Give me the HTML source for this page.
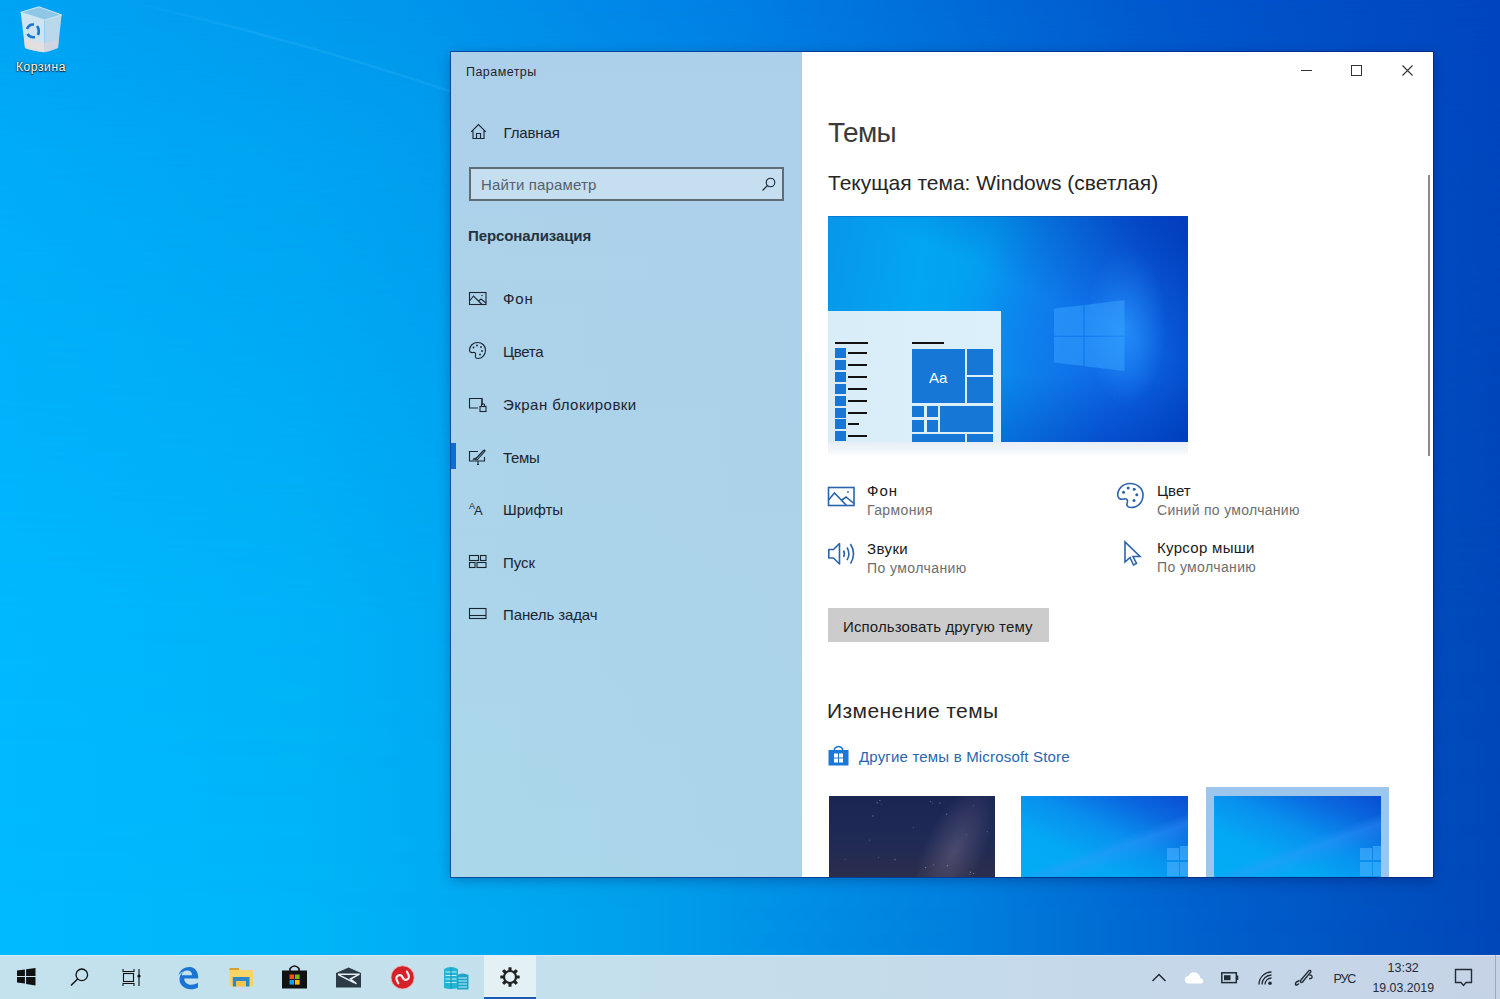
<!DOCTYPE html>
<html><head><meta charset="utf-8"><style>
html,body{margin:0;padding:0;width:1500px;height:999px;overflow:hidden;}
body{position:relative;font-family:'Liberation Sans', sans-serif;}
.t{position:absolute;white-space:nowrap;font-family:'Liberation Sans', sans-serif;}
svg{overflow:visible}
</style></head><body>
<div style="position:absolute;left:0px;top:0px;width:1500px;height:999px;background:linear-gradient(90deg,#00a4f4 0px,#0096ec 415px,#0082e6 700px,#006cd8 950px,#0055cc 1195px,#0045c0 1500px)"></div><div style="position:absolute;left:0px;top:0px;width:1500px;height:999px;background:linear-gradient(90deg,#00baff 0px,#00b5f9 300px,#00a0ec 635px,#0080de 955px,#0060cc 1205px,#0047b8 1500px);-webkit-mask-image:linear-gradient(180deg,rgba(0,0,0,0) 0px,rgba(0,0,0,0.35) 150px,rgba(0,0,0,0.55) 310px,rgba(0,0,0,0.9) 610px,#000 955px);mask-image:linear-gradient(180deg,rgba(0,0,0,0) 0px,rgba(0,0,0,0.35) 150px,rgba(0,0,0,0.55) 310px,rgba(0,0,0,0.9) 610px,#000 955px)"></div><svg style="position:absolute;left:0px;top:0px" width="460" height="100" viewBox="0 0 460 100"><defs><linearGradient id="sg" x1="0" x2="1"><stop offset="0" stop-color="#7fd6ff" stop-opacity="0"/><stop offset="0.4" stop-color="#7fd6ff" stop-opacity="0.12"/><stop offset="1" stop-color="#7fd6ff" stop-opacity="0.1"/></linearGradient></defs><path d="M120 0 Q300 40 452 92" fill="none" stroke="url(#sg)" stroke-width="2.5"/></svg><svg style="position:absolute;left:18px;top:5px" width="46" height="50" viewBox="0 0 46 50">
<path d="M2.7 7.3 L26.6 15 L26 47.3 Q15 46 7 43 Z" fill="#dfe9f0" fill-opacity="0.92"/>
<path d="M26.6 15 L43.6 9.9 L40 43 Q33 46 26 47.3 Z" fill="#c9dceb" fill-opacity="0.92"/>
<path d="M2.7 7.3 L21 1.8 L43.6 9.9 L26.6 15 Z" fill="#9fcbe6" fill-opacity="0.9" stroke="#cfe8f6" stroke-width="1"/>
<path d="M6 34 L26.3 38 L26 47.3 Q15 46 7 43 Z" fill="#ecdcd8" fill-opacity="0.7"/>
<path d="M26.3 38 L40.8 35 L40 43 Q33 46 26 47.3 Z" fill="#e0d4d8" fill-opacity="0.6"/>
<g fill="none" stroke="#1b74cc" stroke-width="2.6"><path d="M9 24 Q11 19 16 19.5"/><path d="M19 21 Q22 25 20 30"/><path d="M17 32 Q12 33 9.5 29"/></g>
</svg><div class="t" style="left:16.0px;top:61.3px;font-size:12px;line-height:12px;color:#fff;font-weight:400;letter-spacing:0.6px;text-shadow:0 0 2px rgba(0,0,0,0.9),0 1px 1px rgba(0,0,0,0.8);">Корзина</div><div style="position:absolute;left:451px;top:52px;width:982px;height:825px;box-shadow:0 0 0 1px rgba(0,25,110,0.55),0 3px 12px rgba(0,0,60,0.3)"></div><div style="position:absolute;left:451px;top:52px;width:351px;height:825px;background:linear-gradient(180deg,#add0ea 0%,#acd4ea 50%,#aad8ea 100%)"></div><div style="position:absolute;left:451px;top:52px;width:351px;height:825px;background:linear-gradient(90deg,rgba(172,214,234,0) 0%,rgba(172,208,234,0.5) 100%)"></div><div class="t" style="left:466.0px;top:66.1px;font-size:12.5px;line-height:12.5px;color:#1b2530;font-weight:400;letter-spacing:0.45px;">Параметры</div><svg style="position:absolute;left:470px;top:123px" width="18" height="17" viewBox="0 0 18 17"><path d="M1.2 8.8 L8.5 1.5 L15.8 8.8 M3 7 V15.5 H14 V7 M6.5 15.5 V10.5 H10.5 V15.5" fill="none" stroke="#1b2530" stroke-width="1.1"/></svg><div class="t" style="left:503.6px;top:125.3px;font-size:15px;line-height:15px;color:#1b2530;font-weight:400;letter-spacing:-0.15px;">Главная</div><div style="position:absolute;left:469px;top:167px;width:315px;height:34px;box-sizing:border-box;border:2px solid #5f6b75;background:rgba(255,255,255,0.3)"></div><div class="t" style="left:481.0px;top:176.8px;font-size:15px;line-height:15px;color:#56616b;font-weight:400;letter-spacing:0.14px;">Найти параметр</div><svg style="position:absolute;left:761px;top:177px" width="15" height="15" viewBox="0 0 15 15"><circle cx="9.5" cy="5.5" r="4.3" fill="none" stroke="#1b2530" stroke-width="1.1"/><path d="M6.5 8.5 L1.5 13.5" fill="none" stroke="#1b2530" stroke-width="1.1"/></svg><div class="t" style="left:468.0px;top:227.8px;font-size:15px;line-height:15px;color:#243240;font-weight:700;letter-spacing:-0.12px;">Персонализация</div><div class="t" style="left:503.0px;top:291.3px;font-size:15px;line-height:15px;color:#1b2530;font-weight:400;letter-spacing:0.9px;">Фон</div><div class="t" style="left:503.0px;top:344.3px;font-size:15px;line-height:15px;color:#1b2530;font-weight:400;letter-spacing:-0.3px;">Цвета</div><div class="t" style="left:503.0px;top:396.8px;font-size:15px;line-height:15px;color:#1b2530;font-weight:400;letter-spacing:0.47px;">Экран блокировки</div><div class="t" style="left:503.0px;top:449.6px;font-size:15px;line-height:15px;color:#1b2530;font-weight:400;letter-spacing:-0.3px;">Темы</div><div class="t" style="left:503.0px;top:502.3px;font-size:15px;line-height:15px;color:#1b2530;font-weight:400;letter-spacing:0px;">Шрифты</div><div class="t" style="left:503.0px;top:555.0px;font-size:15px;line-height:15px;color:#1b2530;font-weight:400;letter-spacing:0px;">Пуск</div><div class="t" style="left:503.0px;top:606.7px;font-size:15px;line-height:15px;color:#1b2530;font-weight:400;letter-spacing:-0.12px;">Панель задач</div><svg style="position:absolute;left:468px;top:291px" width="20" height="15" viewBox="0 0 20 15"><rect x="1.5" y="1.5" width="16.5" height="12" fill="none" stroke="#1b2530" stroke-width="1.1"/><path d="M1.5 10 L5.5 5 L14 13.5 M10.5 10 L13 8 L18 12" fill="none" stroke="#1b2530" stroke-width="1.1"/><circle cx="14" cy="4.5" r="0.7" fill="#1b2530"/></svg><svg style="position:absolute;left:468px;top:341px" width="20" height="20" viewBox="0 0 20 20"><path d="M9.5 1.5 C14.5 1.5 17.5 5 17.5 9 C17.5 14 14 17.5 10 17.5 C7.5 17.5 7 16 7.5 14 C8 12 7 11 5 11.5 C2.5 12 1.5 10.5 1.5 9 C1.5 5 5 1.5 9.5 1.5 Z" fill="none" stroke="#1b2530" stroke-width="1.1"/><circle cx="5.5" cy="6.5" r="0.9" fill="#1b2530"/><circle cx="9" cy="4.5" r="0.9" fill="#1b2530"/><circle cx="13" cy="6" r="0.9" fill="#1b2530"/><circle cx="14" cy="10" r="0.9" fill="#1b2530"/><circle cx="12" cy="13.5" r="0.9" fill="#1b2530"/></svg><svg style="position:absolute;left:468px;top:397px" width="20" height="15" viewBox="0 0 20 15"><path d="M14 8 V1.5 H1.5 V11 H10" fill="none" stroke="#1b2530" stroke-width="1.1"/><path d="M14 8 V1.5" fill="none" stroke="#1b2530" stroke-width="1.1"/><rect x="12" y="9.5" width="6" height="5" fill="none" stroke="#1b2530" stroke-width="1.1"/><path d="M13.5 9.5 V7.5 Q15 6 16.5 7.5 V9.5" fill="none" stroke="#1b2530" stroke-width="1.1"/></svg><svg style="position:absolute;left:468px;top:448px" width="20" height="18" viewBox="0 0 20 18"><path d="M10 3.5 H1.5 V13 H16.5 V9" fill="none" stroke="#1b2530" stroke-width="1.1"/><path d="M9 16.5 H11 M10 13 V16.5" fill="none" stroke="#1b2530" stroke-width="1.1"/><path d="M7 11.5 L15.5 2.5 Q17 1.5 17 3 L9 12 Z" fill="none" stroke="#1b2530" stroke-width="1.1"/><path d="M5 12 Q6 9.5 8 10.5" fill="none" stroke="#1b2530" stroke-width="1.1"/></svg><svg style="position:absolute;left:469px;top:501px" width="18" height="16" viewBox="0 0 18 16"><text x="0" y="8" font-family="Liberation Sans" font-size="9" fill="#1b2530">A</text><text x="5" y="14" font-family="Liberation Sans" font-size="13" fill="#1b2530">A</text></svg><svg style="position:absolute;left:468px;top:554px" width="20" height="15" viewBox="0 0 20 15"><rect x="1.5" y="1.5" width="9" height="5" fill="none" stroke="#1b2530" stroke-width="1.1"/><rect x="12.5" y="1.5" width="5.5" height="5" fill="none" stroke="#1b2530" stroke-width="1.1"/><rect x="1.5" y="8.5" width="5.5" height="5" fill="none" stroke="#1b2530" stroke-width="1.1"/><rect x="9" y="8.5" width="9" height="5" fill="none" stroke="#1b2530" stroke-width="1.1"/></svg><svg style="position:absolute;left:468px;top:607px" width="20" height="13" viewBox="0 0 20 13"><rect x="1.5" y="1.5" width="16.5" height="10" fill="none" stroke="#1b2530" stroke-width="1.1"/><path d="M1.5 8.5 H18" fill="none" stroke="#1b2530" stroke-width="1.1"/></svg><div style="position:absolute;left:451px;top:443px;width:5px;height:26px;background:#0b6ed0"></div><div style="position:absolute;left:802px;top:52px;width:631px;height:825px;background:#fff"></div><svg style="position:absolute;left:1300px;top:64px" width="14" height="12" viewBox="0 0 14 12"><path d="M1 6.5 H12" stroke="#333" stroke-width="1"/></svg><div style="position:absolute;left:1351px;top:64.5px;width:11px;height:11px;box-sizing:border-box;border:1px solid #333"></div><svg style="position:absolute;left:1401px;top:64px" width="13" height="13" viewBox="0 0 13 13"><path d="M1.5 1.5 L11.5 11.5 M11.5 1.5 L1.5 11.5" stroke="#333" stroke-width="1.1"/></svg><div style="position:absolute;left:1428px;top:175px;width:2px;height:281px;background:#8a8a8a"></div><div class="t" style="left:828.0px;top:118.5px;font-size:28px;line-height:28px;color:#3a3a3a;font-weight:400;letter-spacing:-0.6px;">Темы</div><div class="t" style="left:828.0px;top:172.4px;font-size:21px;line-height:21px;color:#262626;font-weight:400;letter-spacing:0px;">Текущая тема: Windows (светлая)</div><div style="position:absolute;left:828px;top:216px;width:360px;height:226px;overflow:hidden;
background:
radial-gradient(ellipse 40px 80px at 298px 110px, rgba(40,150,255,0.8), rgba(40,140,255,0) 100%),
radial-gradient(ellipse 150px 120px at 262px 120px, rgba(20,120,245,0.75), rgba(10,100,230,0) 100%),
linear-gradient(100deg,#0896ea 0%,#02a6f2 25%,#03a0f0 42%,#0a7ee4 60%,#0858d4 78%,#0042c0 100%);">
<div style="position:absolute;left:0;top:0;width:360px;height:226px;background:linear-gradient(205deg,rgba(0,50,180,0.55) 0%,rgba(0,50,180,0) 38%)"></div>
<div style="position:absolute;left:0;top:0;width:360px;height:226px;background:linear-gradient(0deg,rgba(0,60,190,0.35) 0%,rgba(0,60,190,0) 30%)"></div>
<div style="position:absolute;left:0;top:0;width:360px;height:1px;background:rgba(0,70,170,0.35)"></div><svg style="position:absolute;left:0;top:0" width="360" height="226">
<g fill="#3aa6ff" fill-opacity="0.5">
<path d="M226 92.5 L255.5 89.2 L255.5 119.7 L226 119.7 Z"/>
<path d="M256.5 89 L296.5 84 L296.5 119.7 L256.5 119.7 Z"/>
<path d="M226 120.7 L255.5 120.7 L255.5 150 L226 146.6 Z"/>
<path d="M256.5 120.7 L296.5 120.7 L296.5 155 L256.5 150.3 Z"/>
</g></svg>
</div><div style="position:absolute;left:828px;top:442px;width:360px;height:14px;background:linear-gradient(180deg,#e6eef5,#f4f7fa 70%,#fff)"></div><div style="position:absolute;left:828px;top:311px;width:173px;height:131px;background:linear-gradient(90deg,#d9edf9,#dcf0fb)"></div><div style="position:absolute;left:835px;top:342px;width:33px;height:2px;background:#111"></div><div style="position:absolute;left:835px;top:348px;width:10.5px;height:10px;background:#1677d6"></div><div style="position:absolute;left:848px;top:352px;width:18.5px;height:2px;background:#111"></div><div style="position:absolute;left:835px;top:360px;width:10.5px;height:10px;background:#1677d6"></div><div style="position:absolute;left:848px;top:364px;width:18.5px;height:2px;background:#111"></div><div style="position:absolute;left:835px;top:372px;width:10.5px;height:10px;background:#1677d6"></div><div style="position:absolute;left:848px;top:376px;width:18.5px;height:2px;background:#111"></div><div style="position:absolute;left:835px;top:384px;width:10.5px;height:10px;background:#1677d6"></div><div style="position:absolute;left:848px;top:388px;width:18.5px;height:2px;background:#111"></div><div style="position:absolute;left:835px;top:396px;width:10.5px;height:10px;background:#1677d6"></div><div style="position:absolute;left:848px;top:400px;width:18.5px;height:2px;background:#111"></div><div style="position:absolute;left:835px;top:408px;width:10.5px;height:10px;background:#1677d6"></div><div style="position:absolute;left:848px;top:412px;width:18.5px;height:2px;background:#111"></div><div style="position:absolute;left:835px;top:419px;width:10.5px;height:10px;background:#1677d6"></div><div style="position:absolute;left:848px;top:423px;width:11px;height:2px;background:#111"></div><div style="position:absolute;left:835px;top:431px;width:10.5px;height:10px;background:#1677d6"></div><div style="position:absolute;left:848px;top:435px;width:18.5px;height:2px;background:#111"></div><div style="position:absolute;left:912px;top:342px;width:32px;height:2px;background:#111"></div><div style="position:absolute;left:912px;top:348.5px;width:52.799999999999955px;height:54.5px;background:#1677d6"></div><div style="position:absolute;left:967px;top:348.5px;width:26px;height:26.0px;background:#1677d6"></div><div style="position:absolute;left:967px;top:377px;width:26px;height:26px;background:#1677d6"></div><div style="position:absolute;left:912px;top:405.5px;width:12px;height:11.5px;background:#1677d6"></div><div style="position:absolute;left:926.5px;top:405.5px;width:11.5px;height:11.5px;background:#1677d6"></div><div style="position:absolute;left:912px;top:419.5px;width:12px;height:12.0px;background:#1677d6"></div><div style="position:absolute;left:926.5px;top:419.5px;width:11.5px;height:12.0px;background:#1677d6"></div><div style="position:absolute;left:940px;top:405.5px;width:53px;height:26.0px;background:#1677d6"></div><div style="position:absolute;left:912px;top:434px;width:52.799999999999955px;height:8px;background:#1677d6"></div><div style="position:absolute;left:967px;top:434px;width:26px;height:8px;background:#1677d6"></div><div class="t" style="left:929.0px;top:370.3px;font-size:15px;line-height:15px;color:#fff;font-weight:400;letter-spacing:0px;">Aa</div><svg style="position:absolute;left:827px;top:486px" width="29" height="21" viewBox="0 0 29 21"><rect x="1.5" y="1.5" width="25.5" height="18" fill="none" stroke="#2b64ac" stroke-width="1.6"/><path d="M1.5 14 L7.5 7 L19.5 19.5 M15 14 L19 11 L27 17.5" fill="none" stroke="#2b64ac" stroke-width="1.6"/><circle cx="21" cy="6" r="0.9" fill="#2b64ac"/></svg><div class="t" style="left:867.0px;top:483.3px;font-size:15px;line-height:15px;color:#1a1a1a;font-weight:400;letter-spacing:1px;">Фон</div><div class="t" style="left:867.0px;top:503.3px;font-size:14px;line-height:14px;color:#6e6e6e;font-weight:400;letter-spacing:0.37px;">Гармония</div><svg style="position:absolute;left:1116px;top:482px" width="30" height="28" viewBox="0 0 30 28"><path d="M14 1.5 C21.5 1.5 27 6.5 27 13 C27 20.5 21.5 25.5 15 25.5 C11 25.5 10.3 23 11.3 20.5 C12.2 18.3 10.8 16.2 7.8 17 C4 18 1.7 16 1.7 13 C1.7 6.5 7 1.5 14 1.5 Z" fill="none" stroke="#2b64ac" stroke-width="1.6"/><circle cx="7.5" cy="10.2" r="1.5" fill="#2b64ac"/><circle cx="12.2" cy="6" r="1.5" fill="#2b64ac"/><circle cx="18.2" cy="7.3" r="1.5" fill="#2b64ac"/><circle cx="20.8" cy="12.8" r="1.5" fill="#2b64ac"/><circle cx="18" cy="18.5" r="1.5" fill="#2b64ac"/></svg><div class="t" style="left:1157.0px;top:483.0px;font-size:15px;line-height:15px;color:#1a1a1a;font-weight:400;letter-spacing:0px;">Цвет</div><div class="t" style="left:1157.0px;top:502.6px;font-size:14px;line-height:14px;color:#6e6e6e;font-weight:400;letter-spacing:0.3px;">Синий по умолчанию</div><svg style="position:absolute;left:827px;top:541px" width="30" height="26" viewBox="0 0 30 26"><path d="M1.8 8.5 H6.5 L12.5 2.5 V23 L6.5 17 H1.8 Z" fill="none" stroke="#2b64ac" stroke-width="1.6" stroke-linejoin="round"/><path d="M16.5 9.5 Q18.3 12.8 16.5 16 M20 6.5 Q23.8 12.8 20 19.2 M23.5 3 Q29.5 12.8 23.5 22.6" fill="none" stroke="#2b64ac" stroke-width="1.6"/></svg><div class="t" style="left:867.0px;top:540.9px;font-size:15px;line-height:15px;color:#1a1a1a;font-weight:400;letter-spacing:0.4px;">Звуки</div><div class="t" style="left:867.0px;top:560.9px;font-size:14px;line-height:14px;color:#6e6e6e;font-weight:400;letter-spacing:0.42px;">По умолчанию</div><svg style="position:absolute;left:1123px;top:540px" width="22" height="28" viewBox="0 0 22 28"><path d="M2 2 L2 22 L7 17.5 L10.5 25 L13.5 23.5 L10 16.5 L17 16.5 Z" fill="none" stroke="#2b64ac" stroke-width="1.6" stroke-linejoin="miter"/></svg><div class="t" style="left:1157.0px;top:540.0px;font-size:15px;line-height:15px;color:#1a1a1a;font-weight:400;letter-spacing:0.3px;">Курсор мыши</div><div class="t" style="left:1157.0px;top:559.7px;font-size:14px;line-height:14px;color:#6e6e6e;font-weight:400;letter-spacing:0.38px;">По умолчанию</div><div style="position:absolute;left:828px;top:608px;width:221px;height:34px;background:#cccccc"></div><div class="t" style="left:843.0px;top:619.4px;font-size:15px;line-height:15px;color:#1a1a1a;font-weight:400;letter-spacing:0.13px;">Использовать другую тему</div><div class="t" style="left:827.0px;top:700.1px;font-size:21px;line-height:21px;color:#262626;font-weight:400;letter-spacing:0.43px;">Изменение темы</div><svg style="position:absolute;left:827px;top:744px" width="23" height="23" viewBox="0 0 23 23"><path d="M7.5 6 V4.5 Q11.5 0.5 15.5 4.5 V6" fill="none" stroke="#1a78d8" stroke-width="1.6"/><rect x="1.5" y="6" width="20" height="15.5" fill="#1a78d8"/><rect x="7" y="9.5" width="4" height="4" fill="#fff"/><rect x="12" y="9.5" width="4" height="4" fill="#fff"/><rect x="7" y="14.5" width="4" height="4" fill="#fff"/><rect x="12" y="14.5" width="4" height="4" fill="#fff"/></svg><div class="t" style="left:859.0px;top:749.3px;font-size:15px;line-height:15px;color:#2a66b0;font-weight:400;letter-spacing:0.18px;">Другие темы в Microsoft Store</div><div style="position:absolute;left:1206px;top:787px;width:183px;height:90px;background:#9cc6ec"></div><div style="position:absolute;left:829px;top:796px;width:166px;height:81px;overflow:hidden;background:linear-gradient(180deg,#1a2552 0%,#1f2a55 55%,#2b2e4c 100%)">
<svg style="position:absolute;left:0;top:0" width="166" height="81"><circle cx="40.6" cy="43.9" r="0.5" fill="#fff" fill-opacity="0.33"/><circle cx="103.4" cy="7.0" r="0.4" fill="#fff" fill-opacity="0.40"/><circle cx="44.0" cy="20.0" r="0.8" fill="#fff" fill-opacity="0.29"/><circle cx="137.5" cy="38.7" r="0.7" fill="#fff" fill-opacity="0.20"/><circle cx="104.8" cy="68.8" r="0.6" fill="#fff" fill-opacity="0.37"/><circle cx="110.8" cy="6.9" r="0.7" fill="#fff" fill-opacity="0.33"/><circle cx="50.8" cy="4.4" r="0.7" fill="#fff" fill-opacity="0.29"/><circle cx="118.4" cy="69.7" r="0.7" fill="#fff" fill-opacity="0.43"/><circle cx="66.0" cy="63.7" r="0.6" fill="#fff" fill-opacity="0.43"/><circle cx="144.4" cy="9.5" r="0.5" fill="#fff" fill-opacity="0.22"/><circle cx="158.4" cy="35.6" r="0.7" fill="#fff" fill-opacity="0.24"/><circle cx="84.2" cy="31.7" r="0.5" fill="#fff" fill-opacity="0.33"/><circle cx="96.6" cy="71.6" r="0.7" fill="#fff" fill-opacity="0.43"/><circle cx="140.7" cy="78.3" r="0.7" fill="#fff" fill-opacity="0.20"/><circle cx="141.4" cy="76.3" r="0.8" fill="#fff" fill-opacity="0.32"/><circle cx="117.6" cy="18.3" r="0.7" fill="#fff" fill-opacity="0.32"/><circle cx="48.2" cy="6.9" r="0.7" fill="#fff" fill-opacity="0.45"/><circle cx="16.3" cy="63.6" r="0.6" fill="#fff" fill-opacity="0.20"/><circle cx="49.6" cy="61.2" r="0.7" fill="#fff" fill-opacity="0.16"/><circle cx="101.6" cy="5.5" r="0.7" fill="#fff" fill-opacity="0.25"/><circle cx="144.7" cy="77.5" r="0.6" fill="#fff" fill-opacity="0.45"/><circle cx="52.2" cy="7.9" r="0.6" fill="#fff" fill-opacity="0.16"/></svg><div style="position:absolute;left:95px;top:-20px;width:60px;height:150px;transform:rotate(25deg);background:radial-gradient(ellipse 30px 75px at 30px 75px,rgba(130,115,145,0.42),rgba(100,90,130,0) 100%)"></div>
</div><div style="position:absolute;left:1021px;top:796px;width:167px;height:81px;overflow:hidden;background:
linear-gradient(205deg,#0a4ed0 0%,#0a6ae0 22%,#0890ee 45%,#04a8f4 70%,#02acf5 100%)">
<div style="position:absolute;left:0;top:0;width:167px;height:81px;background:linear-gradient(160deg,rgba(255,255,255,0) 55%,rgba(60,150,255,0.35) 62%,rgba(60,150,255,0) 75%)"></div>
<div style="position:absolute;left:146px;top:52px;width:12px;height:12px;background:rgba(80,180,255,0.55)"></div>
<div style="position:absolute;left:159px;top:50px;width:12px;height:14px;background:rgba(80,180,255,0.55)"></div>
<div style="position:absolute;left:146px;top:66px;width:12px;height:14px;background:rgba(80,180,255,0.55)"></div>
<div style="position:absolute;left:159px;top:66px;width:12px;height:14px;background:rgba(80,180,255,0.55)"></div>
</div><div style="position:absolute;left:1214px;top:796px;width:167px;height:81px;overflow:hidden;background:
linear-gradient(205deg,#0a4ed0 0%,#0a6ae0 22%,#0890ee 45%,#04a8f4 70%,#02acf5 100%)">
<div style="position:absolute;left:0;top:0;width:167px;height:81px;background:linear-gradient(160deg,rgba(255,255,255,0) 55%,rgba(60,150,255,0.35) 62%,rgba(60,150,255,0) 75%)"></div>
<div style="position:absolute;left:146px;top:52px;width:12px;height:12px;background:rgba(80,180,255,0.55)"></div>
<div style="position:absolute;left:159px;top:50px;width:12px;height:14px;background:rgba(80,180,255,0.55)"></div>
<div style="position:absolute;left:146px;top:66px;width:12px;height:14px;background:rgba(80,180,255,0.55)"></div>
<div style="position:absolute;left:159px;top:66px;width:12px;height:14px;background:rgba(80,180,255,0.55)"></div>
</div><div style="position:absolute;left:0px;top:955px;width:1500px;height:44px;background:linear-gradient(90deg,#c3e2ed 0%,#c4e0ec 40%,#c5d9ea 70%,#c6d3e7 100%)"></div><div style="position:absolute;left:0px;top:955px;width:1500px;height:1px;background:rgba(255,255,255,0.35)"></div><div style="position:absolute;left:484px;top:955px;width:52px;height:44px;background:#e3f1f4"></div><div style="position:absolute;left:484px;top:997px;width:52px;height:2px;background:#1a5cb0"></div><svg style="position:absolute;left:17px;top:968px" width="19" height="19" viewBox="0 0 19 19"><path d="M0 2.6 L7.9 1.5 V7.9 H0 Z M9.1 1.3 L18.5 0 V7.9 H9.1 Z M0 9.1 H7.9 V15.6 L0 14.5 Z M9.1 9.1 H18.5 V17.5 L9.1 16.1 Z" fill="#111"/></svg><svg style="position:absolute;left:70px;top:968px" width="19" height="19" viewBox="0 0 19 19"><circle cx="11.8" cy="6.8" r="5.8" fill="none" stroke="#111" stroke-width="1.3"/><path d="M7.6 11 L1 17.6" stroke="#111" stroke-width="1.4"/></svg><svg style="position:absolute;left:122px;top:968px" width="19" height="19" viewBox="0 0 19 19"><path d="M1 1 V3.5 H12 V1 M1 18 V15.5 H12 V18" fill="none" stroke="#111" stroke-width="1.1"/><rect x="1.5" y="5.5" width="10" height="8" fill="none" stroke="#111" stroke-width="1.1"/><path d="M17 1 V18" stroke="#111" stroke-width="1.1"/><circle cx="17" cy="8" r="1.6" fill="#111"/></svg><svg style="position:absolute;left:176px;top:966px" width="23" height="24" viewBox="0 0 23 24"><path d="M2.5 9.5 C4 3.5 9 0.8 13.5 1 C19.5 1.2 22.5 6 22.2 12.5 H8.2 C8.3 16.5 11.5 19 15.5 18.8 C18 18.7 20.5 17.8 22 16.8 V21.5 C20 22.8 17.5 23.4 14.5 23.3 C7.5 23 3.5 18.5 3.5 13 C3.5 9.5 5.5 6.5 8.5 5 C6.5 6.5 5.8 8.2 5.7 9.2 H16 C16 6.3 14.5 4.5 11.5 4.5 C7.5 4.5 4.2 7 2.5 9.5 Z" fill="#1a74d2"/></svg><svg style="position:absolute;left:229px;top:967px" width="25" height="21" viewBox="0 0 25 21"><path d="M0.5 1 H10 V4 H0.5 Z" fill="#d9a12c"/><path d="M0.5 3 H24 V19.5 H0.5 Z" fill="#f7d468"/><path d="M3.8 10 H20.5 V19.5 H17 V14 H7.3 V19.5 H3.8 Z" fill="#2f86c8"/><rect x="7.3" y="14" width="9.7" height="5.5" fill="#f2c64c"/></svg><svg style="position:absolute;left:281px;top:964px" width="27" height="25" viewBox="0 0 27 25"><path d="M9 8 V4.5 Q13.5 -0.5 18 4.5 V8" fill="none" stroke="#111" stroke-width="1.6"/><rect x="1" y="6.5" width="25" height="18" fill="#111"/><rect x="8.5" y="10.5" width="4.6" height="4.6" fill="#f25022"/><rect x="14" y="10.5" width="4.6" height="4.6" fill="#7fba00"/><rect x="8.5" y="16" width="4.6" height="4.6" fill="#00a4ef"/><rect x="14" y="16" width="4.6" height="4.6" fill="#ffb900"/></svg><svg style="position:absolute;left:335px;top:967px" width="27" height="21" viewBox="0 0 27 21"><path d="M1 6 L13.6 0.5 L26 6 V20.6 H1 Z" fill="#2b3a44"/><path d="M3 7.2 H24.5 L15.5 12 L21.5 16.8 M3.2 7.6 L19.5 15.8" fill="none" stroke="#e4eef3" stroke-width="1.5" stroke-linejoin="miter"/></svg><svg style="position:absolute;left:390px;top:965px" width="26" height="25" viewBox="0 0 26 25"><circle cx="12.6" cy="12.4" r="11.6" fill="#d42129" stroke="#f2b8b8" stroke-width="0.8"/><g transform="rotate(-25 12.6 12.4)"><path d="M6.2 16 V12 A3.2 3.2 0 0 1 12.6 12 V13 A3.2 3.2 0 0 0 19 13 V9" fill="none" stroke="#ffeaea" stroke-width="2.2" stroke-linecap="round"/></g></svg><svg style="position:absolute;left:443px;top:966px" width="27" height="24" viewBox="0 0 27 24"><path d="M1 3 Q8 -1 15 3 V22 Q8 24 1 22 Z" fill="#22b5d4"/><g stroke="#bff0fa" stroke-width="1.1"><path d="M2.5 6 H13.5 M2.5 9.5 H13.5 M2.5 13 H13.5 M2.5 16.5 H13.5"/></g><path d="M14 9 Q19.5 6 25.5 9 V23.5 H14 Z" fill="#1ea4c6"/><g stroke="#bff0fa" stroke-width="1"><path d="M15.5 12 H24 M15.5 15 H24 M15.5 18 H24 M15.5 21 H24"/></g><path d="M8 1.5 V22.5" stroke="#1791ad" stroke-width="1"/></svg><svg style="position:absolute;left:500px;top:967px" width="20" height="20" viewBox="0 0 20 20"><rect x="8.4" y="0.3" width="3.2" height="4.2" rx="0.6" fill="#222" transform="rotate(0 10 10)"/><rect x="8.4" y="0.3" width="3.2" height="4.2" rx="0.6" fill="#222" transform="rotate(45 10 10)"/><rect x="8.4" y="0.3" width="3.2" height="4.2" rx="0.6" fill="#222" transform="rotate(90 10 10)"/><rect x="8.4" y="0.3" width="3.2" height="4.2" rx="0.6" fill="#222" transform="rotate(135 10 10)"/><rect x="8.4" y="0.3" width="3.2" height="4.2" rx="0.6" fill="#222" transform="rotate(180 10 10)"/><rect x="8.4" y="0.3" width="3.2" height="4.2" rx="0.6" fill="#222" transform="rotate(225 10 10)"/><rect x="8.4" y="0.3" width="3.2" height="4.2" rx="0.6" fill="#222" transform="rotate(270 10 10)"/><rect x="8.4" y="0.3" width="3.2" height="4.2" rx="0.6" fill="#222" transform="rotate(315 10 10)"/><circle cx="10" cy="10" r="6" fill="none" stroke="#222" stroke-width="2.2"/></svg><svg style="position:absolute;left:1151px;top:973px" width="16" height="10" viewBox="0 0 16 10"><path d="M1.5 8 L8 1.5 L14.5 8" fill="none" stroke="#222c35" stroke-width="1.5"/></svg><svg style="position:absolute;left:1184px;top:971px" width="20" height="13" viewBox="0 0 20 13"><path d="M4 12.5 H16.5 C18.5 12.5 19.3 11.2 19.3 10 C19.3 8.5 18 7.3 16.5 7.4 C16 4 13.5 1.2 10 1.2 C7.5 1.2 5.5 2.6 4.8 4.8 C2.5 5 0.8 6.8 0.8 8.8 C0.8 10.8 2.3 12.5 4 12.5 Z" fill="#fff"/></svg><svg style="position:absolute;left:1221px;top:972px" width="18" height="12" viewBox="0 0 18 12"><rect x="0.8" y="0.8" width="14.5" height="9.8" fill="none" stroke="#222c35" stroke-width="1.5"/><rect x="3" y="3.2" width="6.5" height="5" fill="#222c35"/><rect x="15.5" y="3.5" width="1.8" height="4.5" fill="#222c35"/></svg><svg style="position:absolute;left:1258px;top:971px" width="15" height="15" viewBox="0 0 15 15"><path d="M1 13.5 A12.5 12.5 0 0 1 13.5 1 M4 13.5 A9.5 9.5 0 0 1 13.5 4 M7 13.5 A6.5 6.5 0 0 1 13.5 7" fill="none" stroke="#222c35" stroke-width="1.3"/><circle cx="12" cy="12.2" r="1.8" fill="#222c35"/></svg><svg style="position:absolute;left:1294px;top:969px" width="20" height="18" viewBox="0 0 20 18"><path d="M15 1.5 Q17 1 16.8 3 L8.5 13 Q7.5 14 6.5 13 Q6 12 7 11 Z" fill="none" stroke="#222c35" stroke-width="1.4"/><path d="M5.5 11.5 Q1 13 1.5 15.5 Q2.5 17 5 14.5 M15.5 6 Q18.5 6 18 8.5 Q17.5 10 15 9.5" fill="none" stroke="#222c35" stroke-width="1.4"/></svg><div class="t" style="left:1333.5px;top:972.6px;font-size:12.5px;line-height:12.5px;color:#222c35;font-weight:400;letter-spacing:-1.1px;">РУС</div><div class="t" style="left:1387.5px;top:962.2px;font-size:12.5px;line-height:12.5px;color:#222c35;font-weight:400;letter-spacing:0px;">13:32</div><div class="t" style="left:1372.5px;top:982.4px;font-size:12.3px;line-height:12.3px;color:#222c35;font-weight:400;letter-spacing:0px;">19.03.2019</div><svg style="position:absolute;left:1454px;top:968px" width="20" height="20" viewBox="0 0 20 20"><path d="M1.5 1.5 H17.5 V14.5 H12 L9.5 17.5 L7 14.5 H1.5 Z" fill="none" stroke="#222c35" stroke-width="1.4"/></svg><div style="position:absolute;left:1495px;top:955px;width:1px;height:44px;background:rgba(120,130,150,0.5)"></div>
</body></html>
